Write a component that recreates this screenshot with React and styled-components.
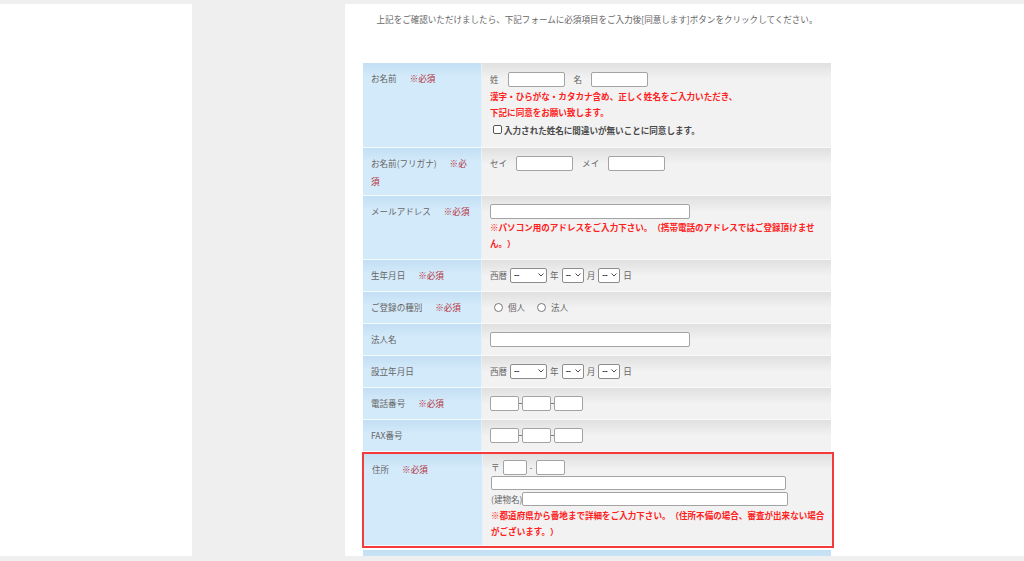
import React from 'react';
import styled, { createGlobalStyle, css } from 'styled-components';

const Global = createGlobalStyle`
  html, body { margin: 0; padding: 0; }
  body {
    background: #efefef;
    font-family: "Noto Sans CJK JP", "Noto Sans", sans-serif;
    text-spacing-trim: space-all;
  }
`;

const Page = styled.div`
  height: 561px;
  box-sizing: border-box;
  padding: 4px 0 5px;
  display: flex;
  overflow: hidden;
`;

const Side = styled.aside`
  flex: none;
  width: 192px;
  background: #fff;
`;

const Main = styled.main`
  flex: 1;
  margin-left: 153px;
  background: #fff;
  padding: 10px 0 0 18px;
  overflow: hidden;
`;

const Inner = styled.div`
  width: 468px;
`;

const Intro = styled.p`
  margin: 0 0 39px;
  text-align: center;
  font-size: 8.55px;
  line-height: 10px;
  color: #666;
  white-space: nowrap;
`;

const Form = styled.div`
  display: flex;
  flex-direction: column;
`;

const Label = styled.div`
  background: linear-gradient(#c3dff3, #d3eafa 14px);
  padding: 6px 10px 5px 8px;
  font-size: 8.55px;
  line-height: 18px;
  color: #666;
  border-bottom: 1px solid #f4faff;
`;

const Value = styled.div`
  background: linear-gradient(#e0e0e0, #f2f2f2 16px);
  padding: 7px 5px 8px 8px;
  font-size: 8.55px;
  line-height: 16px;
  color: #666;
  border-bottom: 1px solid #fafafa;
  border-left: 1px solid #e6f2fb;
`;

const Row = styled.div`
  display: grid;
  grid-template-columns: 118px 1fr;
  ${(p) =>
    p.$alert &&
    css`
      border: 2px solid #f43a3a;
      margin: 0 -3px 2px -1px;
      & > ${Value} {
        padding-top: 5px;
        padding-bottom: 6px;
      }
    `}
`;

const Req = styled.span`
  color: #b3303a;
  margin-left: 13px;
`;

const Line = styled.div`
  display: flex;
  align-items: center;
  height: ${(p) => p.$h || 16}px;
  gap: ${(p) => p.$gap || 0}px;
  white-space: nowrap;
`;

const Note = styled.div`
  color: #ff2020;
  font-weight: 700;
  line-break: strict;
`;

const TextInput = styled.input`
  box-sizing: border-box;
  width: ${(p) => p.$w}px;
  height: ${(p) => p.$h || 15}px;
  margin: 0;
  padding: 0 2px;
  border: 1px solid #a3a3a3;
  border-radius: 2px;
  background: #fff;
  font-size: 8px;
  flex: none;
`;

const Select = styled.span`
  box-sizing: border-box;
  display: inline-flex;
  align-items: center;
  justify-content: space-between;
  flex: none;
  width: ${(p) => p.$w}px;
  height: 15px;
  padding: 0 2px 0 3px;
  border: 1px solid #8c8c8c;
  border-radius: 2px;
  background: #fff;
  color: #222;
  font-size: 8px;
  font-weight: 700;
  letter-spacing: -0.5px;
`;

const Chevron = styled.svg`
  width: 6px;
  height: 4px;
  flex: none;
`;

const Dash = styled.span`
  display: inline-block;
  width: ${(p) => p.$w || 3}px;
  height: 1px;
  background: #777;
  flex: none;
`;

const Check = styled.span`
  box-sizing: border-box;
  display: inline-block;
  width: 9px;
  height: 9px;
  border: 1px solid #555;
  border-radius: 2px;
  background: #fff;
  margin: 0 2px 0 3px;
  flex: none;
`;

const CheckText = styled.span`
  color: #4a4a4a;
  font-weight: 700;
`;

const Radio = styled.span`
  box-sizing: border-box;
  display: inline-block;
  width: 9px;
  height: 9px;
  border: 1px solid #777;
  border-radius: 50%;
  background: #fff;
  margin-left: ${(p) => p.$ml || 0}px;
  margin-right: 5px;
  flex: none;
`;

const BlankRow = styled.div`
  height: 30px;
  background: linear-gradient(#c3dff3, #d3eafa 14px);
`;

const Sel = ({ w }) => (
  <Select $w={w}>
    <span>--</span>
    <Chevron viewBox="0 0 6 4">
      <path d="M0.5 0.5 L3 3 L5.5 0.5" fill="none" stroke="#333" strokeWidth="0.9" />
    </Chevron>
  </Select>
);

const DateFields = () => (
  <Line $gap={3}>
    <span>西暦</span>
    <Sel w={37} />
    <span>年</span>
    <Sel w={22} />
    <span>月</span>
    <Sel w={22} />
    <span>日</span>
  </Line>
);

const Phone = () => (
  <Line>
    <TextInput $w={29} />
    <Dash />
    <TextInput $w={29} />
    <Dash />
    <TextInput $w={29} />
  </Line>
);

export default function App() {
  return (
    <>
      <Global />
      <Page>
        <Side />
        <Main>
          <Inner>
            <Intro>
              上記をご確認いただけましたら、下記フォームに必須項目をご入力後[同意します]ボタンをクリックしてください。
            </Intro>
            <Form>
              <Row>
                <Label>
                  お名前<Req>※必須</Req>
                </Label>
                <Value>
                  <Line $gap={9} $h={18}>
                    <span>姓</span>
                    <TextInput $w={57} />
                    <span>名</span>
                    <TextInput $w={57} />
                  </Line>
                  <Note>漢字・ひらがな・カタカナ含め、正しく姓名をご入力いただき、</Note>
                  <Note>下記に同意をお願い致します。</Note>
                  <Line $h={19}>
                    <Check />
                    <CheckText>入力された姓名に間違いが無いことに同意します。</CheckText>
                  </Line>
                </Value>
              </Row>
              <Row>
                <Label>
                  お名前(フリガナ)<Req>※必須</Req>
                </Label>
                <Value>
                  <Line $gap={9}>
                    <span>セイ</span>
                    <TextInput $w={57} />
                    <span>メイ</span>
                    <TextInput $w={57} />
                  </Line>
                </Value>
              </Row>
              <Row>
                <Label>
                  メールアドレス<Req>※必須</Req>
                </Label>
                <Value>
                  <Line>
                    <TextInput $w={200} />
                  </Line>
                  <Note>
                    ※パソコン用のアドレスをご入力下さい。（携帯電話のアドレスではご登録頂けません。）
                  </Note>
                </Value>
              </Row>
              <Row>
                <Label>
                  生年月日<Req>※必須</Req>
                </Label>
                <Value>
                  <DateFields />
                </Value>
              </Row>
              <Row>
                <Label>
                  ご登録の種別<Req>※必須</Req>
                </Label>
                <Value>
                  <Line>
                    <Radio $ml={4} />
                    <span>個人</span>
                    <Radio $ml={12} />
                    <span>法人</span>
                  </Line>
                </Value>
              </Row>
              <Row>
                <Label>法人名</Label>
                <Value>
                  <Line>
                    <TextInput $w={200} />
                  </Line>
                </Value>
              </Row>
              <Row>
                <Label>設立年月日</Label>
                <Value>
                  <DateFields />
                </Value>
              </Row>
              <Row>
                <Label>
                  電話番号<Req>※必須</Req>
                </Label>
                <Value>
                  <Phone />
                </Value>
              </Row>
              <Row>
                <Label>FAX番号</Label>
                <Value>
                  <Phone />
                </Value>
              </Row>
              <Row $alert>
                <Label>
                  住所<Req>※必須</Req>
                </Label>
                <Value>
                  <Line $gap={3}>
                    <span>〒</span>
                    <TextInput $w={24} />
                    <span>-</span>
                    <TextInput $w={29} />
                  </Line>
                  <Line>
                    <TextInput $w={295} $h={14} />
                  </Line>
                  <Line>
                    <span>(建物名)</span>
                    <TextInput $w={266} $h={14} />
                  </Line>
                  <Note>
                    ※都道府県から番地まで詳細をご入力下さい。（住所不備の場合、審査が出来ない場合がございます。）
                  </Note>
                </Value>
              </Row>
              <BlankRow />
            </Form>
          </Inner>
        </Main>
      </Page>
    </>
  );
}
